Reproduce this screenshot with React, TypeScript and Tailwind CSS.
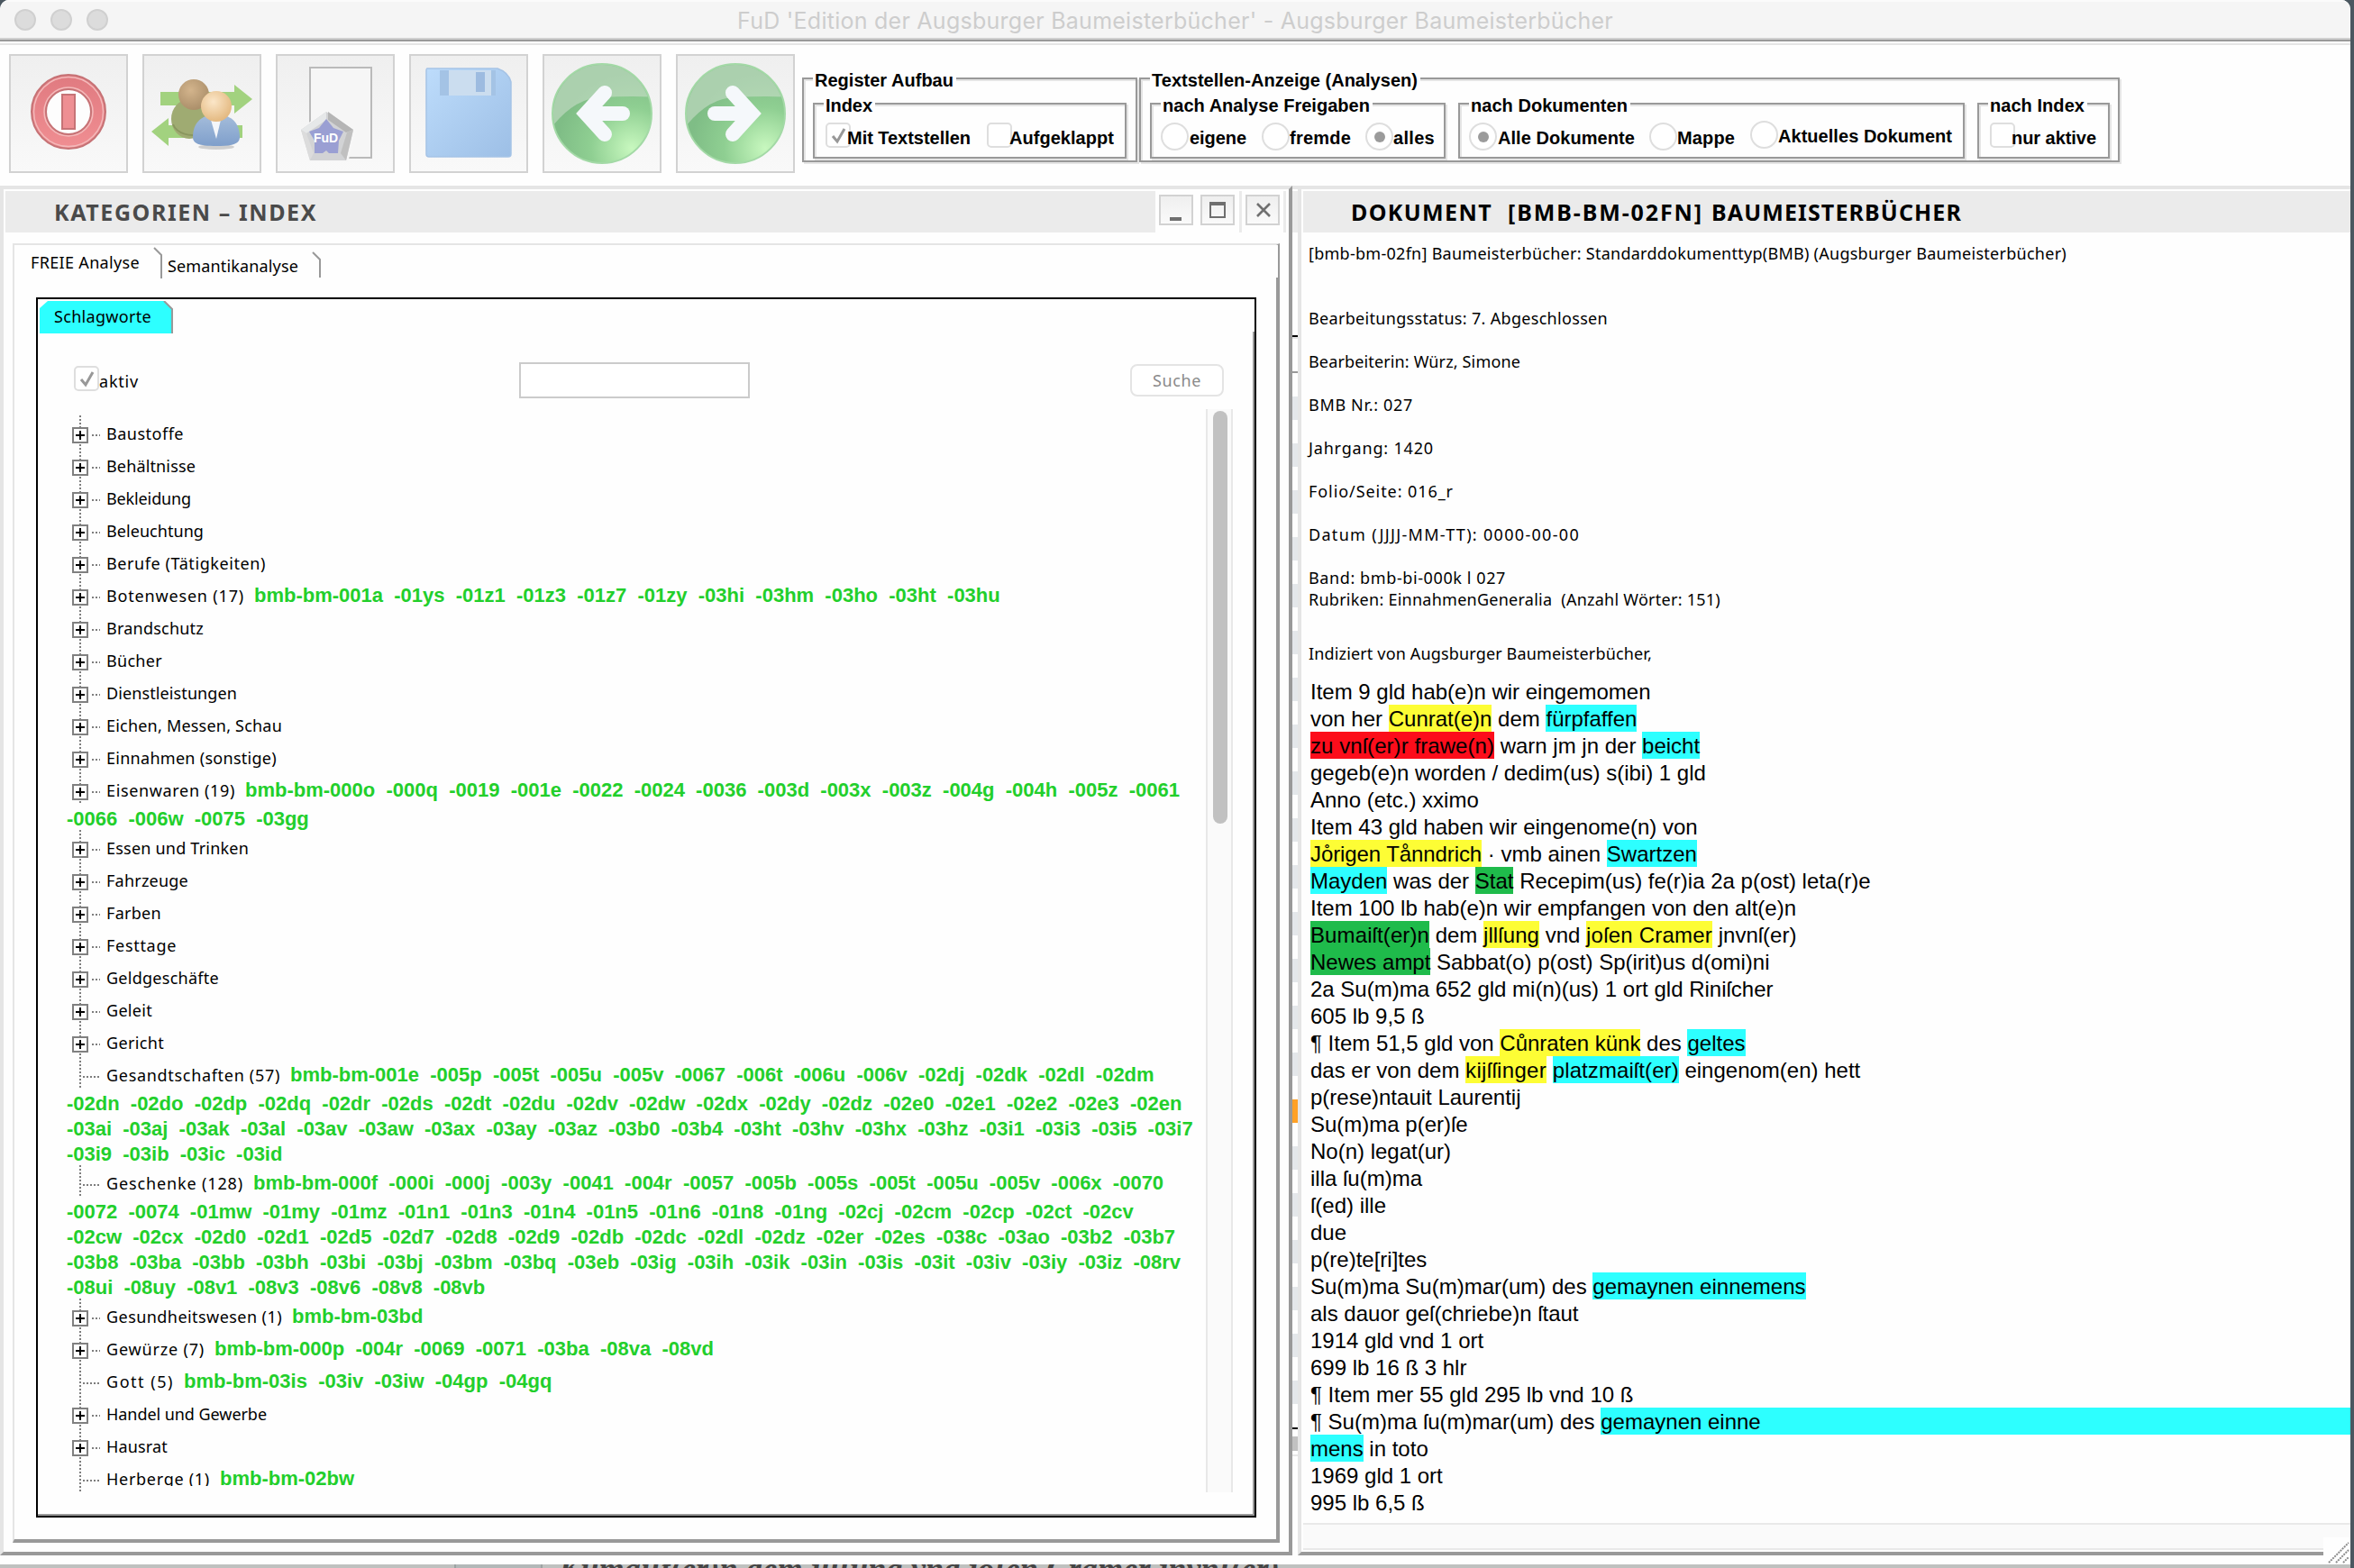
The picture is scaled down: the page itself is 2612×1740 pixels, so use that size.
import { useLayoutEffect, useRef } from "react";
import type { ReactNode } from "react";

const LUCIDA = "font-['Noto_Sans','Open_Sans',sans-serif]";
const HELV = "font-['Liberation_Sans',Arial,sans-serif]";

/* Text run tracked so that it fills exactly w pixels. */
function Fit({ w, className = "", children }: { w: number; className?: string; children: string }) {
  const ref = useRef<HTMLSpanElement>(null);
  useLayoutEffect(() => {
    const el = ref.current;
    if (!el) return;
    el.style.letterSpacing = "0px";
    const natural = el.getBoundingClientRect().width;
    el.style.letterSpacing = `${(w - natural) / children.length}px`;
  }, [w, children]);
  return (
    <span ref={ref} className={`inline-block shrink-0 whitespace-pre ${className}`}>
      {children}
    </span>
  );
}

/* ---------- toolbar icons ---------- */

function PowerIcon() {
  return (
    <svg viewBox="0 0 128 128" className="h-32 w-32">
      <defs>
        <linearGradient id="pw" x1="0" y1="0" x2="0" y2="1">
          <stop offset="0" stopColor="#e07a80" />
          <stop offset="1" stopColor="#f08e92" />
        </linearGradient>
      </defs>
      <circle cx="64" cy="62" r="41" fill="url(#pw)" stroke="#c67376" strokeWidth="2" />
      <circle cx="64" cy="62" r="38.5" fill="none" stroke="#f3b9ba" strokeWidth="1.5" />
      <circle cx="64" cy="62" r="25" fill="#fdfdfd" stroke="#c67376" strokeWidth="2" />
      <circle cx="64" cy="62" r="27" fill="none" stroke="#f3b9ba" strokeWidth="1.5" />
      <rect x="57" y="43" width="14" height="38" fill="#ee8f93" stroke="#c67376" strokeWidth="2" />
    </svg>
  );
}

function UsersIcon() {
  return (
    <svg viewBox="0 0 128 128" className="h-32 w-32">
      <defs>
        <radialGradient id="hd1" cx=".4" cy=".35" r=".7">
          <stop offset="0" stopColor="#d3b48c" />
          <stop offset="1" stopColor="#a98d68" />
        </radialGradient>
        <radialGradient id="hd2" cx=".4" cy=".35" r=".7">
          <stop offset="0" stopColor="#fbe6c8" />
          <stop offset="1" stopColor="#e2b67c" />
        </radialGradient>
        <linearGradient id="bd2" x1="0" y1="0" x2="0" y2="1">
          <stop offset="0" stopColor="#a5bddb" />
          <stop offset="1" stopColor="#7f9fcb" />
        </linearGradient>
      </defs>
      <path d="M18 40h82v-8l20 16-20 16v-9H18z" fill="#a2d27f" />
      <path d="M109 91H27v9L8 84l19-15v8h82z" fill="#a2d27f" />
      <ellipse cx="50" cy="70" rx="20" ry="22" fill="#9fab72" />
      <path d="M32 76c4 10 20 15 30 10" fill="none" stroke="#8a965f" strokeWidth="2" />
      <circle cx="55" cy="43" r="17" fill="url(#hd1)" />
      <ellipse cx="80" cy="101" rx="20" ry="3" fill="#cfcfcf" />
      <path d="M54 90c0-16 10-25 26-25s26 9 26 25c0 7-6 10-26 10s-26-3-26-10z" fill="url(#bd2)" />
      <path d="M74 71h11l-5 21z" fill="#f4f6fa" />
      <circle cx="80" cy="56" r="17" fill="url(#hd2)" />
    </svg>
  );
}

function FudIcon() {
  return (
    <span className="relative block h-32 w-32">
      <svg viewBox="0 0 128 128" className="h-32 w-32">
        <rect x="36" y="13" width="68" height="100" fill="#f6f6f6" stroke="#bababa" strokeWidth="2" />
        <path d="M54 60L88 82L78 118H36L24 82z" fill="#f7f7f7" />
        <path d="M54 62L84 82L76 116H36L26 82z" fill="#d2d3d5" />
        <path d="M54 62L26 82L32 86L54 71z" fill="#e6e8e9" />
        <path d="M56 62L84 82L76 85L56 71z" fill="#b5b5b5" />
        <path d="M84 82L76 116L70 108L77 85z" fill="#c0c0c0" />
        <path d="M26 82L36 116L40 108L32 86z" fill="#dcdcdc" />
        <path d="M54 70L62 80L73 84L68 94L67 108H57L54 105L50 108H41L41 94L35 84L46 80z" fill="#9a9fd3" />
      </svg>
      <span className={`absolute left-[40px] top-[82px] text-[14px] font-bold leading-[18px] text-white ${HELV}`}>FuD</span>
    </span>
  );
}

function DiskIcon() {
  return (
    <svg viewBox="0 0 128 128" className="h-32 w-32">
      <defs>
        <linearGradient id="dk" x1="0" y1="0" x2="1" y2="1">
          <stop offset="0" stopColor="#bddcfb" />
          <stop offset="1" stopColor="#9dbfe6" />
        </linearGradient>
      </defs>
      <path d="M18 14h78q12 4 15 15v80q0 3-3 3H20q-3 0-3-3V17q0-3 1-3z" fill="url(#dk)" stroke="#a5c3e6" strokeWidth="1.5" />
      <rect x="32" y="16" width="62" height="28" fill="#a4c3e5" />
      <rect x="42" y="16" width="47" height="28" fill="#cbddef" />
      <rect x="72" y="18" width="10" height="22" fill="#9dbbe0" />
    </svg>
  );
}

function ArrowIcon({ forward = false }: { forward?: boolean }) {
  const id = forward ? "gf" : "gb";
  return (
    <svg viewBox="0 0 128 128" className="h-32 w-32">
      <defs>
        <radialGradient id={id} cx=".8" cy=".85" r=".75">
          <stop offset="0" stopColor="#c8f8bf" />
          <stop offset=".55" stopColor="#8fcf92" />
          <stop offset="1" stopColor="#7fbd86" />
        </radialGradient>
        <clipPath id={`${id}c`}>
          <circle cx="64" cy="64" r="54" />
        </clipPath>
      </defs>
      <circle cx="64" cy="64" r="55" fill={`url(#${id})`} stroke="#a3d9a6" strokeWidth="2" />
      <path d="M0 90Q30 46 64 46Q100 44 128 46V0H0z" fill="#cfe0cf" fillOpacity=".55" clipPath={`url(#${id}c)`} />
      <g transform={forward ? "translate(128 0) scale(-1 1)" : undefined} fill="none" stroke="#f5f8fb" strokeWidth="16" strokeLinecap="round">
        <path d="M67 41L46 64L67 87" strokeLinejoin="miter" />
        <path d="M50 64H87" />
      </g>
    </svg>
  );
}

function ToolButton({ children }: { children: ReactNode }) {
  return (
    <button className="flex h-[132px] w-[132px] shrink-0 items-center justify-center border-2 border-[#d2d2d2] bg-linear-to-b from-[#efefef] to-[#f9f9f9]">
      {children}
    </button>
  );
}

/* ---------- toolbar option groups ---------- */

const ETCHED = "border-2 border-[#999] shadow-[2px_2px_0_#e5e5e5,inset_2px_2px_0_#e5e5e5]";

function Group({ title, tw, className, children }: { title: string; tw: number; className: string; children: ReactNode }) {
  return (
    <div className={`relative flex shrink-0 ${ETCHED} ${className}`}>
      <span className="absolute left-[10px] top-[-10px] bg-[#fefefe] pl-[2px] pr-[3px] leading-[22px]">
        <Fit w={tw}>{title}</Fit>
      </span>
      {children}
    </div>
  );
}

function Check({ on = false }: { on?: boolean }) {
  return (
    <span className="block h-[28px] w-[28px] shrink-0 rounded-[5px] border-2 border-[#dedede] bg-white">
      {on && (
        <svg viewBox="0 0 24 24" className="h-6 w-6">
          <path d="M6 13L11 19L19 5" fill="none" stroke="#989898" strokeWidth="3" />
        </svg>
      )}
    </span>
  );
}

function Radio({ on = false }: { on?: boolean }) {
  return (
    <span className="flex h-[31px] w-[31px] shrink-0 items-center justify-center rounded-full border-2 border-[#dedede] bg-white">
      {on && <span className="h-[12px] w-[12px] rounded-full bg-[#9b9b9b]" />}
    </span>
  );
}

function Option({ box, label, w, className = "" }: { box: ReactNode; label: string; w: number; className?: string }) {
  return (
    <label className={`flex h-[31px] shrink-0 ${className}`}>
      {box}
      <Fit w={w} className="leading-[34px]">{label}</Fit>
    </label>
  );
}

/* ---------- category tree ---------- */

type Row = { label: string; w: number; leaf?: boolean; refs?: string[]; cut?: boolean };

const ROWS: Row[] = [
  { label: "Baustoffe", w: 83 },
  { label: "Behältnisse", w: 96 },
  { label: "Bekleidung", w: 91 },
  { label: "Beleuchtung", w: 105 },
  { label: "Berufe (Tätigkeiten)", w: 174 },
  { label: "Botenwesen (17)", w: 150, refs: ["bmb-bm-001a  -01ys  -01z1  -01z3  -01z7  -01zy  -03hi  -03hm  -03ho  -03ht  -03hu"] },
  { label: "Brandschutz", w: 105 },
  { label: "Bücher", w: 59 },
  { label: "Dienstleistungen", w: 142 },
  { label: "Eichen, Messen, Schau", w: 192 },
  { label: "Einnahmen (sonstige)", w: 186 },
  {
    label: "Eisenwaren (19)",
    w: 140,
    refs: [
      "bmb-bm-000o  -000q  -0019  -001e  -0022  -0024  -0036  -003d  -003x  -003z  -004g  -004h  -005z  -0061",
      "-0066  -006w  -0075  -03gg",
    ],
  },
  { label: "Essen und Trinken", w: 155 },
  { label: "Fahrzeuge", w: 88 },
  { label: "Farben", w: 58 },
  { label: "Festtage", w: 75 },
  { label: "Geldgeschäfte", w: 122 },
  { label: "Geleit", w: 48 },
  { label: "Gericht", w: 61 },
  {
    label: "Gesandtschaften (57)",
    w: 190,
    leaf: true,
    refs: [
      "bmb-bm-001e  -005p  -005t  -005u  -005v  -0067  -006t  -006u  -006v  -02dj  -02dk  -02dl  -02dm",
      "-02dn  -02do  -02dp  -02dq  -02dr  -02ds  -02dt  -02du  -02dv  -02dw  -02dx  -02dy  -02dz  -02e0  -02e1  -02e2  -02e3  -02en",
      "-03ai  -03aj  -03ak  -03al  -03av  -03aw  -03ax  -03ay  -03az  -03b0  -03b4  -03ht  -03hv  -03hx  -03hz  -03i1  -03i3  -03i5  -03i7",
      "-03i9  -03ib  -03ic  -03id",
    ],
  },
  {
    label: "Geschenke (128)",
    w: 149,
    leaf: true,
    refs: [
      "bmb-bm-000f  -000i  -000j  -003y  -0041  -004r  -0057  -005b  -005s  -005t  -005u  -005v  -006x  -0070",
      "-0072  -0074  -01mw  -01my  -01mz  -01n1  -01n3  -01n4  -01n5  -01n6  -01n8  -01ng  -02cj  -02cm  -02cp  -02ct  -02cv",
      "-02cw  -02cx  -02d0  -02d1  -02d5  -02d7  -02d8  -02d9  -02db  -02dc  -02dl  -02dz  -02er  -02es  -038c  -03ao  -03b2  -03b7",
      "-03b8  -03ba  -03bb  -03bh  -03bi  -03bj  -03bm  -03bq  -03eb  -03ig  -03ih  -03ik  -03in  -03is  -03it  -03iv  -03iy  -03iz  -08rv",
      "-08ui  -08uy  -08v1  -08v3  -08v6  -08v8  -08vb",
    ],
  },
  { label: "Gesundheitswesen (1)", w: 192, refs: ["bmb-bm-03bd"] },
  { label: "Gewürze (7)", w: 106, refs: ["bmb-bm-000p  -004r  -0069  -0071  -03ba  -08va  -08vd"] },
  { label: "Gott (5)", w: 72, leaf: true, refs: ["bmb-bm-03is  -03iv  -03iw  -04gp  -04gq"] },
  { label: "Handel und Gewerbe", w: 175 },
  { label: "Hausrat", w: 65 },
  { label: "Herberge (1)", w: 112, leaf: true, cut: true, refs: ["bmb-bm-02bw"] },
];

const GREEN = `whitespace-pre text-[22px] font-bold text-[#22cf2b] ${HELV}`;

function Branch({ leaf = false }: { leaf?: boolean }) {
  return (
    <svg width="40" height="40" viewBox="0 0 40 40" className="absolute left-[38px] top-[-4px]" shapeRendering="crispEdges">
      <path d="M9 0V36" stroke="#7d7d7d" strokeWidth="2" strokeDasharray="2 2" />
      <path d={leaf ? "M12 22H31" : "M22 22H31"} stroke="#7d7d7d" strokeWidth="2" strokeDasharray="2 2" />
      {!leaf && (
        <>
          <rect x="1" y="14" width="16" height="16" fill="#fefefe" stroke="#808080" strokeWidth="2" />
          <path d="M4 22H14M9 17V27" stroke="#000" strokeWidth="2" />
        </>
      )}
    </svg>
  );
}

function TreeRow({ row }: { row: Row }) {
  const [first, ...rest] = row.refs ?? [];
  return (
    <div className="shrink-0">
      <div className="relative flex h-[36px] items-baseline pl-[76px]">
        <Branch leaf={row.leaf} />
        <Fit w={row.w + 3} className={row.cut ? "leading-[32px] [clip-path:inset(0_0_8px_0)]" : "leading-[32px]"}>
          {row.label}
        </Fit>
        {first && <span className={`ml-[11px] leading-[32px] ${GREEN}`}>{first}</span>}
      </div>
      {rest.map((line) => (
        <div key={line} className={`h-[28px] pl-[32px] leading-[23px] tracking-[-0.01px] ${GREEN}`}>
          {line}
        </div>
      ))}
    </div>
  );
}

function CategoryPane() {
  return (
    <section className="flex h-[1520px] w-[1434px] shrink-0 flex-col border-4 border-b-[#999] border-l-[#e5e5e5] border-r-[#999] border-t-[#e5e5e5] pt-[2px]">
      <header className="flex h-[46px] shrink-0 pl-[2px]">
        <div className="w-[1276px] bg-[#ebebeb] pl-[54px] text-[25px] font-bold text-[#4a4a4a]">
          <Fit w={292} className="leading-[46px]">KATEGORIEN – INDEX</Fit>
        </div>
        <button className="ml-[4px] mt-[4px] h-[34px] w-[38px] border-2 border-[#d2d2d2] bg-linear-to-b from-[#efefef] to-[#fafafa] pl-[10px] pt-[20px]">
          <span className="block h-[4px] w-[13px] bg-[#6f6f6f]" />
        </button>
        <button className="ml-[8px] mt-[4px] h-[34px] w-[38px] border-2 border-[#d2d2d2] bg-linear-to-b from-[#efefef] to-[#fafafa] pl-[8px]">
          <span className="block h-[18px] w-[18px] border-2 border-t-4 border-[#6f6f6f]" />
        </button>
        <span className="ml-[5px] w-[3px] bg-[#ebebeb]" />
        <button className="ml-[4px] mt-[4px] flex h-[34px] w-[38px] items-center justify-center border-2 border-[#d2d2d2] bg-linear-to-b from-[#efefef] to-[#fafafa] pl-[2px]">
          <svg width="16" height="16" viewBox="0 0 16 16">
            <path d="M1 1L15 15M15 1L1 15" stroke="#707070" strokeWidth="2.6" />
          </svg>
        </button>
        <span className="ml-[4px] w-[3px] bg-[#ebebeb]" />
      </header>

      <div className="relative ml-[10px] mt-[12px] flex h-[1442px] w-[1406px] flex-col border-b-4 border-l-2 border-r-4 border-t-2 border-b-[#999] border-l-[#e5e5e5] border-r-[#999] border-t-[#e5e5e5]">
        <span className="absolute right-[-2px] top-0 h-[36px] w-[2px] bg-[#fefefe]" />
        <nav className="flex h-[58px] shrink-0 pl-[18px]">
          <Fit w={121} className="leading-[38px]">FREIE Analyse</Fit>
          <svg width="12" height="40" viewBox="0 0 12 40" className="ml-[15px]">
            <path d="M1 3L9 11V37" fill="none" stroke="#999" strokeWidth="2" />
          </svg>
          <Fit w={145} className="ml-[4px] pt-[4px] leading-[38px]">Semantikanalyse</Fit>
          <svg width="12" height="40" viewBox="0 0 12 40" className="ml-[15px]">
            <path d="M1 8L9 16V36" fill="none" stroke="#999" strokeWidth="2" />
          </svg>
        </nav>

        <div className="ml-[24px] flex h-[1354px] w-[1354px] shrink-0 flex-col border-2 border-black">
          <div className="relative flex h-[1350px] w-[1350px] flex-col border-b-2 border-[#999]">
            <span className="absolute bottom-0 right-0 top-[36px] w-[2px] bg-[#999]" />
            <div className="relative ml-[2px] mt-[2px] h-[36px] w-[148px] shrink-0">
              <svg width="148" height="36" viewBox="0 0 148 36" className="absolute left-0 top-0">
                <path d="M0 36V8L9 0H138L147 9V36z" fill="#2dffff" />
                <path d="M138 0L147 9V36" fill="none" stroke="#999" strokeWidth="2" />
              </svg>
              <Fit w={108} className="relative ml-[16px] leading-[34px]">Schlagworte</Fit>
            </div>
            <div className="flex h-[84px] shrink-0 pl-[40px]">
              <span className="mt-[36px]">
                <Check on />
              </span>
              <Fit w={44} className="mt-[36px] leading-[34px]">aktiv</Fit>
              <input className="ml-[422px] mt-[32px] h-[40px] w-[256px] border-2 border-[#cbcbcb] bg-white" />
              <button className="ml-[422px] mt-[34px] h-[36px] w-[104px] rounded-[8px] border-2 border-[#e4e4e4] bg-white text-[#8a8a8a]">
                <Fit w={54} className="block leading-[30px]">Suche</Fit>
              </button>
            </div>
            <div className="flex h-[1202px] shrink-0 overflow-hidden">
              <div className="flex w-[1296px] shrink-0 flex-col pt-[11px]">
                {ROWS.map((row) => (
                  <TreeRow key={row.label} row={row} />
                ))}
              </div>
              <div className="h-full w-[30px] shrink-0 border-x-2 border-[#e8e8e8] bg-[#fafafa] pl-[6px] pt-[2px]">
                <div className="h-[458px] w-[16px] rounded-full bg-[#c1c1c1]" />
              </div>
            </div>
          </div>
        </div>
      </div>
    </section>
  );
}

/* ---------- sliver of the window lying between the two panes ---------- */

function Sliver() {
  return (
    <div className="flex w-[6px] shrink-0 flex-col">
      <span className="h-[4px] bg-[#e5e5e5]" />
      <span className="mt-[2px] h-[46px] bg-[#ebebeb]" />
      <span className="mt-[114px] h-[2px] bg-black" />
      <span className="h-[2px] bg-[#e5e5e5]" />
      <span className="mt-[36px] h-[2px] bg-[#999]" />
      <span className="h-[26px]" />
      {Array.from({ length: 22 }, (_, i) => (
        <span key={i} className={i === 15 ? "mb-[26px] h-[26px] shrink-0 bg-[#ffa126]" : "mb-[26px] h-[26px] shrink-0 bg-[#e4e7ea]"} />
      ))}
      <span className="h-[2px] shrink-0 bg-black" />
      <span className="mt-[8px] h-[16px] shrink-0 bg-[#c1c1c1]" />
      <span className="mt-[4px] h-[2px] shrink-0 bg-[#e8e8e8]" />
    </div>
  );
}

/* ---------- document pane ---------- */

const INFO: [string, number, string][] = [
  ["[bmb-bm-02fn] Baumeisterbücher: Standarddokumenttyp(BMB) (Augsburger Baumeisterbücher)", 841, "mb-[48px]"],
  ["Bearbeitungsstatus: 7. Abgeschlossen", 332, "mb-[24px]"],
  ["Bearbeiterin: Würz, Simone", 235, "mb-[24px]"],
  ["BMB Nr.: 027", 116, "mb-[24px]"],
  ["Jahrgang: 1420", 139, "mb-[24px]"],
  ["Folio/Seite: 016_r", 161, "mb-[24px]"],
  ["Datum (JJJJ-MM-TT): 0000-00-00", 301, "mb-[24px]"],
  ["Band: bmb-bi-000k l 027", 219, ""],
  ["Rubriken: EinnahmenGeneralia  (Anzahl Wörter: 151)", 457, "mb-[36px]"],
  ["Indiziert von Augsburger Baumeisterbücher,", 381, "mb-[15px]"],
];

const MARK = {
  y: "bg-[#fdfd35]",
  c: "bg-[#2dffff]",
  r: "bg-[#fc0d1b]",
  g: "bg-[#1fbb4b]",
  w: "grow bg-[#2dffff]",
};

type Piece = string | [keyof typeof MARK, string, number?];

const LINES: Piece[][] = [
  ["Item 9 gld hab(e)n wir eingemomen"],
  ["von her ", ["y", "Cunrat(e)n"], " dem ", ["c", "fürpfaffen"]],
  [["r", "zu vnſ(er)r frawe(n)", 204], " warn jm jn der ", ["c", "beicht"]],
  ["gegeb(e)n worden / dedim(us) s(ibi) 1 gld"],
  ["Anno (etc.) xximo"],
  ["Item 43 gld haben wir eingenome(n) von"],
  [["y", "Jo̊rigen Tånndrich", 190], " · vmb ainen ", ["c", "Swartzen"]],
  [["c", "Mayden"], " was der ", ["g", "Stat"], " Recepim(us) fe(r)ia 2a p(ost) leta(r)e"],
  ["Item 100 lb hab(e)n wir empfangen von den alt(e)n"],
  [["g", "Bumaiſt(er)n", 132], " dem ", ["y", "jllſung", 62], " vnd ", ["y", "joſen Cramer", 140], " jnvnſ(er)"],
  [["g", "Newes ampt"], " Sabbat(o) p(ost) Sp(irit)us d(omi)ni"],
  ["2a Su(m)ma 652 gld mi(n)(us) 1 ort gld Riniſcher"],
  ["605 lb 9,5 ß"],
  ["¶ Item 51,5 gld von ", ["y", "Cůnraten künk"], " des ", ["c", "geltes"]],
  ["das er von dem ", ["y", "kijſſinger", 90], " ", ["c", "platzmaiſt(er)", 140], " eingenom(en) hett"],
  ["p(rese)ntauit Laurentij"],
  ["Su(m)ma p(er)ſe"],
  ["No(n) legat(ur)"],
  ["illa ſu(m)ma"],
  ["ſ(ed) ille"],
  ["due"],
  ["p(re)te[ri]tes"],
  ["Su(m)ma Su(m)mar(um) des ", ["c", "gemaynen einnemens"]],
  ["als dauor geſ(chriebe)n ſtaut"],
  ["1914 gld vnd 1 ort"],
  ["699 lb 16 ß 3 hlr"],
  ["¶ Item mer 55 gld 295 lb vnd 10 ß"],
  ["¶ Su(m)ma ſu(m)mar(um) des ", ["w", "gemaynen einne"]],
  [["c", "mens"], " in toto"],
  ["1969 gld 1 ort"],
  ["995 lb 6,5 ß"],
];

function DocumentPane() {
  return (
    <section className="flex h-[1520px] w-[1168px] shrink-0 flex-col border-b-4 border-l-4 border-t-4 border-b-[#999] border-l-[#e5e5e5] border-t-[#e5e5e5] pt-[2px]">
      <header className="ml-[2px] flex h-[46px] shrink-0 bg-[#ebebeb] pl-[53px] text-[25px] font-bold leading-[46px] text-black">
        <Fit w={157}>DOKUMENT</Fit>
        <Fit w={217} className="ml-[17px]">[BMB-BM-02FN]</Fit>
        <Fit w={278} className="ml-[9px]">BAUMEISTERBÜCHER</Fit>
      </header>
      <div className="mt-[11px] flex shrink-0 flex-col items-start pl-[8px]">
        {INFO.map(([text, w, gap]) => (
          <Fit key={text} w={w} className={`leading-[24px] ${gap}`}>
            {text}
          </Fit>
        ))}
      </div>
      <div className={`shrink-0 text-[24px] leading-[32px] ${HELV}`}>
        {LINES.map((line, i) => (
          <div key={i} className="flex h-[30px] whitespace-pre pl-[10px]">
            {line.map((p, j) =>
              typeof p === "string" ? (
                <span key={j}>{p}</span>
              ) : (
                <span key={j} className={`h-[30px] ${MARK[p[0]]}`}>
                  {p[2] ? <Fit w={p[2]}>{p[1]}</Fit> : p[1]}
                </span>
              ),
            )}
          </div>
        ))}
      </div>
      <div className="ml-[2px] mt-[8px] h-[30px] shrink-0 border-y-2 border-[#e9e9e9] bg-[#fafafa]" />
    </section>
  );
}

export default function App() {
  return (
    <div className={`relative h-[1740px] w-[2612px] overflow-hidden bg-[#4b5760] text-[18px] text-black ${LUCIDA}`}>
      <div className="relative flex h-[1736px] w-[2608px] flex-col overflow-hidden rounded-t-[10px] bg-[#fefefe]">
        <header className="relative flex h-[46px] shrink-0 items-center justify-center border-b-2 border-[#999] bg-[#f5f5f5] shadow-[inset_0_2px_0_#fbfbfb,inset_0_-2px_0_#d0d0d0]">
          <div className="absolute left-[16px] top-[10px] flex gap-[16px]">
            <span className="h-[24px] w-[24px] rounded-full border-2 border-[#d0d0d0] bg-[#dcdcdc]" />
            <span className="h-[24px] w-[24px] rounded-full border-2 border-[#d0d0d0] bg-[#dcdcdc]" />
            <span className="h-[24px] w-[24px] rounded-full border-2 border-[#d0d0d0] bg-[#dcdcdc]" />
          </div>
          <Fit w={972} className="pt-[2px] font-['Inter',sans-serif] text-[25px] leading-[44px] text-[#cdcdcd]">
            FuD 'Edition der Augsburger Baumeisterbücher' - Augsburger Baumeisterbücher
          </Fit>
        </header>
        <div className="mt-[2px] h-[2px] shrink-0 bg-[#e5e5e5]" />

        <div className="flex h-[156px] shrink-0 gap-[16px] pl-[10px] pt-[10px]">
          <ToolButton><PowerIcon /></ToolButton>
          <ToolButton><UsersIcon /></ToolButton>
          <ToolButton><FudIcon /></ToolButton>
          <ToolButton><DiskIcon /></ToolButton>
          <ToolButton><ArrowIcon /></ToolButton>
          <ToolButton><ArrowIcon forward /></ToolButton>
          <div className={`ml-[-8px] mt-[26px] flex gap-[2px] text-[20px] font-bold ${HELV}`}>
            <Group title="Register Aufbau" tw={154} className="h-[94px] w-[372px] pl-[10px] pt-[26px]">
              <Group title="Index" tw={52} className="h-[62px] w-[348px] pl-[12px] pt-[20px]">
                <Option box={<Check on />} label="Mit Textstellen" w={137} className="[&>span:last-child]:ml-[-4px]" />
                <Option box={<Check />} label="Aufgeklappt" w={116} className="ml-[18px] [&>span:last-child]:ml-[-3px]" />
              </Group>
            </Group>
            <Group title="Textstellen-Anzeige (Analysen)" tw={295} className="h-[94px] w-[1088px] gap-[14px] pl-[10px] pt-[26px]">
              <Group title="nach Analyse Freigaben" tw={230} className="h-[62px] w-[328px] pl-[10px] pt-[20px]">
                <Option box={<Radio />} label="eigene" w={63} className="[&>span:last-child]:ml-[1px]" />
                <Option box={<Radio />} label="fremde" w={68} className="ml-[17px]" />
                <Option box={<Radio on />} label="alles" w={46} className="ml-[16px]" />
              </Group>
              <Group title="nach Dokumenten" tw={174} className="h-[62px] w-[562px] pl-[10px] pt-[20px]">
                <Option box={<Radio on />} label="Alle Dokumente" w={152} className="[&>span:last-child]:ml-[1px]" />
                <Option box={<Radio />} label="Mappe" w={64} className="ml-[16px]" />
                <Option box={<Radio />} label="Aktuelles Dokument" w={193} className="ml-[17px] mt-[-2px]" />
              </Group>
              <Group title="nach Index" tw={105} className="h-[62px] w-[147px] pl-[12px] pt-[20px]">
                <Option box={<Check />} label="nur aktive" w={94} className="[&>span:last-child]:ml-[-4px]" />
              </Group>
            </Group>
          </div>
        </div>

        <main className="flex h-[1530px] shrink-0">
          <CategoryPane />
          <Sliver />
          <DocumentPane />
        </main>

        <svg width="30" height="30" viewBox="0 0 30 30" className="absolute bottom-0 right-0 bg-[#fefefe]">
          <path d="M6 28L28 6M14 28L28 14M22 28L28 22" stroke="#8a8a8a" strokeWidth="2" strokeDasharray="2 1" />
        </svg>
      </div>

      <div className="flex h-[4px] w-[2608px] overflow-hidden bg-[#bfc1bf]">
        <span className="ml-[504px] w-[98px] border-x-2 border-[#9da3a3] bg-[#b3b8b8]" />
        <Fit w={800} className="ml-[18px] mt-[-13px] font-['Liberation_Serif',serif] text-[36px] font-bold italic leading-[36px] text-[#444]">
          Kümaiſt(er)n dem jllſung vnd joſen Cramer jnvnſ(er)
        </Fit>
      </div>
    </div>
  );
}
